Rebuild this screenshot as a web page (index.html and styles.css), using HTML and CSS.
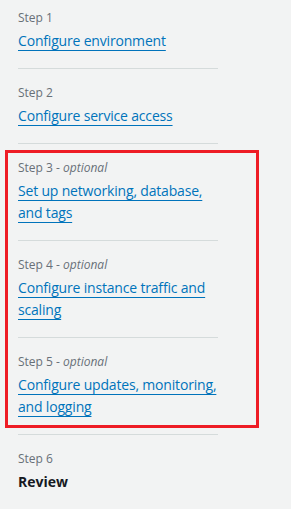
FILE: index.html
```html
<!DOCTYPE html>
<html lang="en">
<head>
<meta charset="utf-8">
<link rel="stylesheet" href="styles.css">
</head>
<body>
<nav class="wizard-nav">
  <ol class="steps">
    <li class="step">
      <span class="step-label">Step 1</span>
      <a class="step-link" href="#">Configure environment</a>
    </li>
    <li class="step">
      <span class="step-label">Step 2</span>
      <a class="step-link" href="#">Configure service access</a>
    </li>
    <li class="step">
      <span class="step-label">Step 3 - <i>optional</i></span>
      <a class="step-link" href="#">Set up networking, database, and tags</a>
    </li>
    <li class="step">
      <span class="step-label">Step 4 - <i>optional</i></span>
      <a class="step-link" href="#">Configure instance traffic and scaling</a>
    </li>
    <li class="step">
      <span class="step-label">Step 5 - <i>optional</i></span>
      <a class="step-link" href="#">Configure updates, monitoring, and logging</a>
    </li>
    <li class="step">
      <span class="step-label">Step 6</span>
      <span class="step-current">Review</span>
    </li>
  </ol>
  <div class="highlight"></div>
</nav>
</body>
</html>
```
FILE: styles.css
```css
html, body {
  margin: 0;
  padding: 0;
  background: #f2f3f3;
}
body {
  font-family: "Open Sans", "Noto Sans", sans-serif;
  color: #16191f;
}
.wizard-nav {
  position: relative;
  padding: 10px 0 0 18px;
}
.steps {
  list-style: none;
  margin: 0;
  padding: 0;
  width: 200px;
}
.step {
  display: flex;
  flex-direction: column;
  align-items: flex-start;
  gap: 4px;
  padding: 16px 0;
  border-top: 1px solid #d5dbdb;
}
.step:first-child {
  border-top: none;
  padding-top: 0;
}
.step-label {
  font-size: 12px;
  line-height: 16px;
  color: #687078;
}
.step-label i {
  font-style: italic;
}
.step-link {
  font-size: 14px;
  line-height: 22px;
  letter-spacing: -0.18px;
  color: #0073bb;
  text-decoration: underline;
  text-underline-offset: 4px;
}
.step-current {
  font-size: 14px;
  line-height: 22px;
  font-weight: 700;
  color: #16191f;
}
.highlight {
  position: absolute;
  left: 5px;
  top: 150px;
  width: 248px;
  height: 272px;
  border: 3px solid #ee1c25;
  pointer-events: none;
}
```
